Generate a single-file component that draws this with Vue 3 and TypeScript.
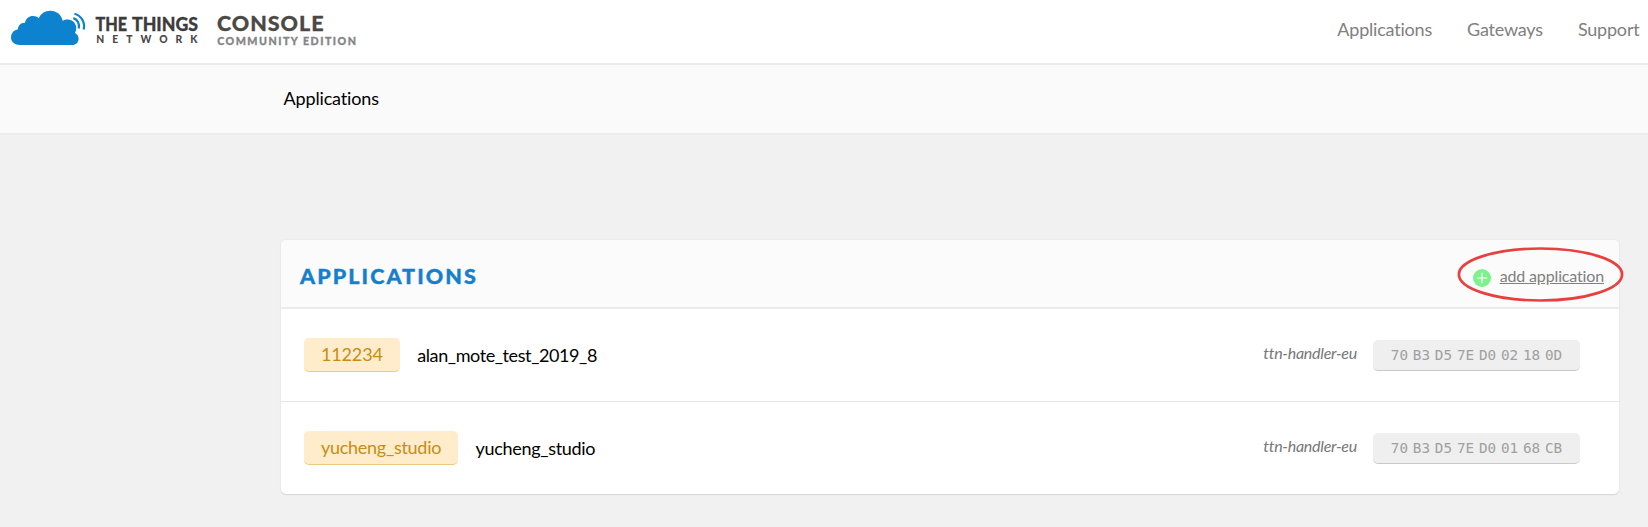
<script setup lang="ts">
interface Application {
  id: string
  name: string
  handler: string
  eui: string[]
}

const links: string[] = ['Applications', 'Gateways', 'Support']

const applications: Application[] = [
  { id: '112234', name: 'alan_mote_test_2019_8', handler: 'ttn-handler-eu', eui: ['70', 'B3', 'D5', '7E', 'D0', '02', '18', '0D'] },
  { id: 'yucheng_studio', name: 'yucheng_studio', handler: 'ttn-handler-eu', eui: ['70', 'B3', 'D5', '7E', 'D0', '01', '68', 'CB'] },
]
</script>

<template>
  <div class="page">
    <header class="topbar">
      <svg class="logo" width="370" height="63" viewBox="0 0 370 63">
        <path fill="#0d83d0" d="M20 45C14.600 45 11 41.800 11 37.500C11 33 14 30 18 29.200C17.800 25.500 21 22.500 25 22.700C25.800 18.500 29 16 33 16C35.500 16 37.300 16.900 38.800 18.300C40.500 13.700 45 10.700 50.300 10.700C56.800 10.700 61.500 14.900 62.700 20.700C64.300 19.800 66 19.500 67.700 19.500C72.500 19.500 76.200 23.200 76.200 28C76.200 30 75.700 31.700 74.900 33C77.300 34.100 78.600 36.200 78.600 38.700C78.600 42.300 75.900 45 72.200 45Z" />
        <g fill="none" stroke="#0d83d0" stroke-width="2.200">
          <path d="M73.300 18.100C77.300 19.300 79.800 23.500 78.800 28.500" />
          <path d="M74.500 13.800C81.400 15.800 85.300 22 83.700 29.500" />
        </g>
        <g class="brand">
          <text y="30.600" font-size="18" fill="#3c3c3c" stroke="#3c3c3c">
            <tspan x="95.500" textLength="31.700" lengthAdjust="spacingAndGlyphs">THE</tspan>
            <tspan x="132" textLength="66" lengthAdjust="spacingAndGlyphs">THINGS</tspan>
          </text>
          <text x="96.300" y="43" font-size="10.300" textLength="101.200" fill="#484848">NETWORK</text>
          <text x="217" y="31" font-size="21.500" textLength="106.500" fill="#4b4945" stroke="#4b4945">CONSOLE</text>
          <text x="217.200" y="45" font-size="10.700" textLength="138.800" fill="#858585" stroke="#858585">COMMUNITY EDITION</text>
        </g>
      </svg>
      <nav class="nav">
        <a v-for="link in links" :key="link">{{ link }}</a>
      </nav>
    </header>

    <div class="crumbs">Applications</div>

    <main class="card">
      <div class="card-head">
        <h1>APPLICATIONS</h1>
        <a class="add">
          <svg width="18" height="18" viewBox="0 0 18 18">
            <circle cx="9" cy="9" r="9" fill="#7df28c" />
            <path d="M9 3.700V14.300M3.700 9H14.300" stroke="#fff" stroke-width="1.200" />
          </svg>
          <span>add application</span>
        </a>
        <svg class="marker" width="168" height="58" viewBox="0 0 168 58">
          <ellipse cx="83.500" cy="29.500" rx="81.600" ry="26" fill="none" stroke="#e8403f" stroke-width="2.700" />
        </svg>
      </div>
      <div v-for="app in applications" :key="app.id" class="row">
        <span class="tag">{{ app.id }}</span>
        <span class="name">{{ app.name }}</span>
        <em class="handler">{{ app.handler }}</em>
        <span class="eui"><span v-for="(byte, i) in app.eui" :key="i">{{ byte }}</span></span>
      </div>
    </main>
  </div>
</template>

<style>
body {
  margin: 0;
  background: #f1f1f1;
}
</style>

<style scoped>
.page {
  height: 527px;
  overflow: hidden;
  background: #f1f1f1;
  font-family: Lato, "Liberation Sans", sans-serif;
  font-size: 18px;
  letter-spacing: -0.150px;
  color: #000;
}
.topbar {
  display: flex;
  justify-content: space-between;
  height: 63px;
  background: #fff;
  border-bottom: 2px solid #ebebeb;
}
.logo {
  display: block;
  letter-spacing: 0;
}
.brand {
  font-weight: 900;
  stroke-width: 0.300px;
}
.nav {
  display: flex;
  gap: 35px;
  padding-right: 8.500px;
  line-height: 58px;
  color: #808080;
  letter-spacing: -0.200px;
}
.crumbs {
  height: 68px;
  padding-left: 283.500px;
  line-height: 67px;
  background: #fafafa;
  border-bottom: 2px solid #ececec;
}
.card {
  width: 1338px;
  margin: 105px 0 0 281px;
  background: #fff;
  border-radius: 5px;
  box-shadow: 0 1px 1px #d6d6d6, 0 0 1px 1px #ebebeb;
}
.card-head {
  position: relative;
  display: flex;
  align-items: center;
  justify-content: space-between;
  height: 67px;
  padding: 0 15px 0 19px;
  background: #fbfbfb;
  border-bottom: 2px solid #ebebeb;
  border-radius: 5px 5px 0 0;
}
h1 {
  margin: 4px 0 0;
  font-size: 21.500px;
  font-weight: 900;
  letter-spacing: 2.080px;
  color: #167fcb;
  -webkit-text-stroke: 0.400px #167fcb;
}
.add {
  display: flex;
  align-items: center;
  gap: 9px;
  margin-top: 8px;
  font-size: 16px;
  color: #808080;
}
.add span {
  margin-top: -4px;
  text-decoration: underline;
}
.marker {
  position: absolute;
  top: 5px;
  right: -6px;
}
.row {
  display: flex;
  align-items: center;
  height: 92px;
  padding: 0 39px 0 23px;
}
.row + .row {
  border-top: 1px solid #e6e6e6;
}
.tag {
  height: 33px;
  padding: 0 17px;
  line-height: 33px;
  color: #c58c16;
  background: #ffecca;
  border-bottom: 1px solid #ebcb82;
  border-radius: 5px;
}
.row + .row .tag {
  letter-spacing: -0.280px;
}
.name {
  margin: -1px 0 0 17.500px;
  letter-spacing: -0.410px;
}
.row + .row .name {
  letter-spacing: -0.320px;
}
.handler {
  margin: -5px 16px 0 auto;
  font-size: 16px;
  letter-spacing: -0.250px;
  color: #777;
}
.eui {
  display: flex;
  justify-content: center;
  gap: 4.800px;
  width: 207px;
  height: 30px;
  line-height: 30px;
  font-family: "DejaVu Sans Mono", monospace;
  font-size: 14.300px;
  letter-spacing: 0;
  color: #a0a0a0;
  background: #efefef;
  border-bottom: 1px solid #c9c9c9;
  border-radius: 5px;
}
</style>
